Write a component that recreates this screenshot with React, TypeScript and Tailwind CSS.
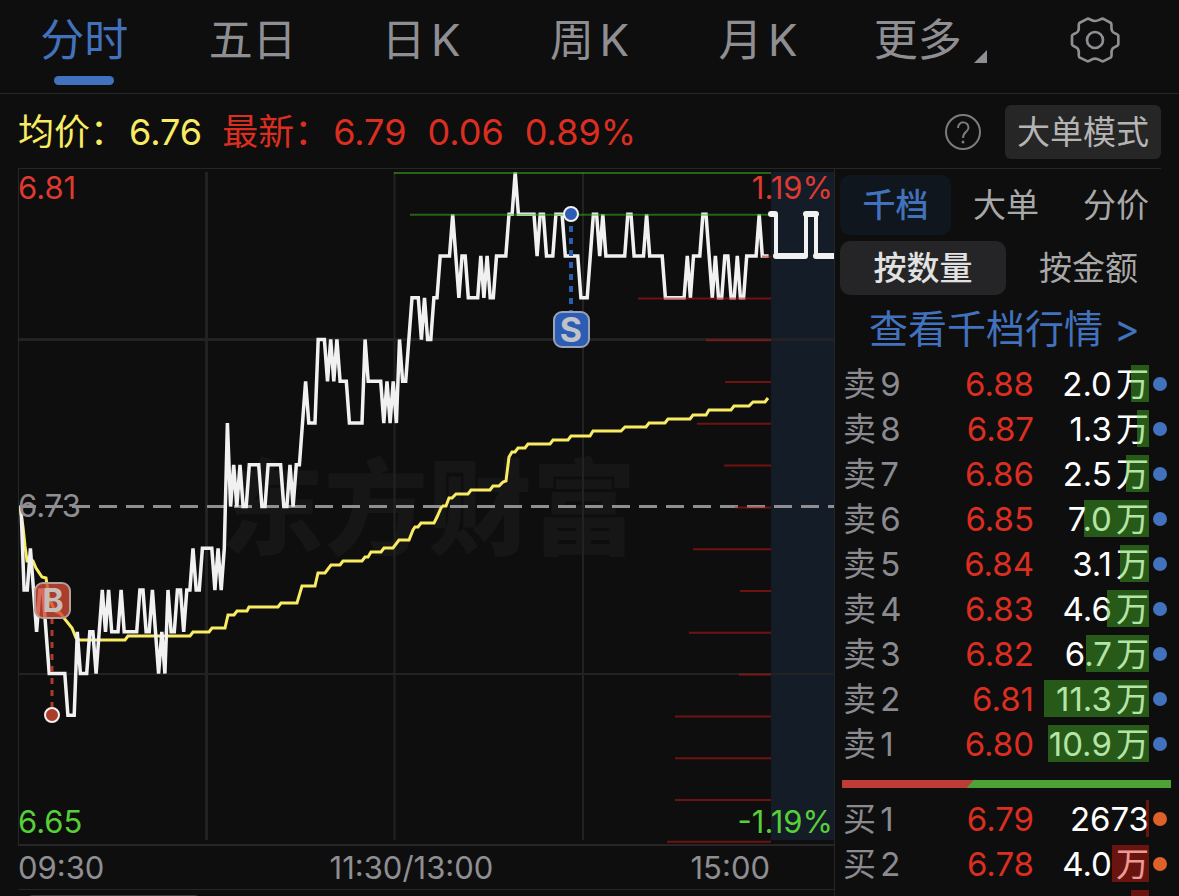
import React from 'react';

const tabs = ['分时', '五日', '日K', '周K', '月K'];

// [minute, price in cents above 6.00]
const prices: [number, number][] = [
  [0, 73], [1, 71], [2, 71], [3, 72], [5, 70], [6, 71], [7, 71], [9, 69], [14, 69], [15, 68],
  [17, 68], [18, 70], [19, 69], [21, 69], [22, 70], [23, 70], [24, 69], [26, 71], [27, 70], [28, 71],
  [29, 70], [31, 70], [32, 71], [33, 70], [37, 70], [38, 71], [39, 71], [40, 70], [41, 70], [42, 71],
  [44, 69], [45, 70], [46, 69], [47, 71], [48, 70], [49, 70], [50, 71], [51, 71], [52, 70], [53, 71],
  [54, 71], [55, 72], [56, 71], [57, 71], [58, 72], [61, 72], [62, 71], [63, 72], [64, 71], [65, 72],
  [66, 75], [67, 73], [68, 74], [69, 73], [70, 74], [71, 73], [72, 73], [73, 74], [76, 74], [77, 73],
  [78, 73], [79, 74], [83, 74], [84, 73], [85, 73], [86, 74], [87, 73], [88, 74], [89, 74], [91, 76],
  [92, 75], [94, 75], [95, 77], [97, 77], [98, 76], [99, 77], [100, 76], [101, 77], [102, 76], [104, 76],
  [105, 75], [109, 75], [110, 77], [111, 76], [115, 76], [116, 75], [117, 76], [118, 75], [119, 76], [120, 75],
  [121, 77], [122, 76], [123, 76], [125, 78], [127, 78], [128, 77], [129, 78], [130, 77], [131, 77], [132, 78],
  [133, 78], [134, 79], [137, 79], [138, 80], [140, 78], [141, 79], [142, 79], [143, 78], [146, 78], [147, 79],
  [148, 78], [149, 79], [150, 78], [151, 78], [152, 79], [155, 79], [156, 80], [157, 80], [158, 81], [159, 80],
  [164, 80], [165, 79], [166, 80], [167, 80], [168, 79], [170, 79], [171, 80], [173, 80], [174, 79], [178, 79],
  [179, 78], [181, 78], [183, 80], [184, 80], [185, 79], [186, 80], [187, 79], [193, 79], [194, 80], [195, 80],
  [196, 79], [199, 79], [200, 80], [201, 79], [205, 79], [206, 78], [212, 78], [213, 79], [214, 78], [215, 79],
  [217, 79], [218, 80], [219, 80], [221, 78], [222, 79], [223, 78], [224, 78], [225, 79], [226, 79], [227, 78],
  [228, 78], [229, 79], [230, 78], [231, 78], [232, 79], [235, 79], [236, 80], [237, 79], [239, 79],
];

const average =
  '20,506 23,527 25,546 27,561 33,561 36,568 42,577 46,578 49,598 55,611 60,613 72,628 76,638 80,640 125,640 128,636 190,636 193,632 209,632 212,628 225,628 228,615 234,615 237,611 247,611 249,607 278,607 281,603 297,603 302,586 315,586 318,573 325,573 331,565 340,565 343,561 362,561 365,557 368,557 371,552 381,552 384,548 393,548 399,540 409,540 413,530 415,527 418,527 421,523 434,523 437,517 441,508 443,506 446,506 449,498 452,498 456,494 468,494 471,490 490,490 493,486 499,486 503,482 506,481 509,457 512,452 515,452 518,448 525,448 528,444 550,444 553,440 568,440 571,436 590,436 593,431 621,431 625,427 646,427 649,423 665,423 668,419 690,419 693,415 706,415 709,410 731,410 734,406 749,406 753,402 765,402 768,398';

// start x of every volume bar, top price level first
const levels = [394, 410, 762, 638, 706, 725, 697, 724, 735, 693, 740, 689, 739, 675, 675, 675, 667];

const toX = (minute: number) => 21 + minute * 3.128;
const toY = (cents: number) => 172.5 + (81 - cents) * 41.75;
const pricePoints = prices.map(([m, c]) => `${toX(m).toFixed(1)},${toY(c).toFixed(1)}`).join(' ');

type Order = { label: string; price: string; volume: string; bar: number };

const asks: Order[] = [
  { label: '卖9', price: '6.88', volume: '2.0万', bar: 18 },
  { label: '卖8', price: '6.87', volume: '1.3万', bar: 12 },
  { label: '卖7', price: '6.86', volume: '2.5万', bar: 23 },
  { label: '卖6', price: '6.85', volume: '7.0万', bar: 65 },
  { label: '卖5', price: '6.84', volume: '3.1万', bar: 29 },
  { label: '卖4', price: '6.83', volume: '4.6万', bar: 42 },
  { label: '卖3', price: '6.82', volume: '6.7万', bar: 63 },
  { label: '卖2', price: '6.81', volume: '11.3万', bar: 105 },
  { label: '卖1', price: '6.80', volume: '10.9万', bar: 101 },
];

const bids: Order[] = [
  { label: '买1', price: '6.79', volume: '2673', bar: 3 },
  { label: '买2', price: '6.78', volume: '4.0万', bar: 37 },
  { label: '', price: '', volume: '', bar: 18 },
];

function OrderTable({ orders, side }: { orders: Order[]; side: 'ask' | 'bid' }) {
  const barColor = side === 'ask' ? 'bg-[#4ac026]/42' : 'bg-[#dc1c12]/45';
  const dotColor = side === 'ask' ? 'bg-[#4272bd]' : 'bg-[#dd6128]';
  return (
    <table className="w-full table-fixed border-collapse text-[33px] leading-[45px]">
      <tbody>
        {orders.map((o) => (
          <tr key={o.label} className="h-[45px]">
            <td className="w-[80px] p-0 pl-2 text-left text-[#8a8a8f]">{o.label}</td>
            <td className="p-0 text-right text-[#dc2e20]">{o.price}</td>
            <td className="relative w-[115px] p-0 text-right whitespace-nowrap text-white">
              {o.volume}
              <span className={`absolute right-0 top-[3px] h-[37px] ${barColor}`} style={{ width: o.bar }} />
            </td>
            <td className="w-[30px] p-0 pb-0.5 pl-1">
              {o.label && <span className={`block size-[14px] rounded-full ${dotColor}`} />}
            </td>
          </tr>
        ))}
      </tbody>
    </table>
  );
}

function Chart() {
  return (
    <svg viewBox="19 169 815 675" className="block h-auto w-full" role="img" aria-label="分时走势">
      <rect x="771" y="172" width="63" height="668" fill="#141c28" />

      {/* Watermark */}
      <text x="220" y="547" fontSize="104" fontWeight="900" fill="#161616">东方财富</text>

      {/* Grid */}
      <g stroke="#222222">
        <path d="M206.5 172V840M19 339.5H834" strokeWidth="3" />
        <path d="M394.5 172V840M583 172V840M19 674H834" strokeWidth="2" />
      </g>
      <path d="M18 506.5H834" stroke="#8e8e93" strokeWidth="3" strokeDasharray="18 9" />

      <polyline points={average} fill="none" stroke="#f9ec62" strokeWidth="3" />
      <polyline points={pricePoints} fill="none" stroke="#f1f1f1" strokeWidth="3.5" />

      {/* Volume at price */}
      {levels.map((x, i) => (
        <path
          key={i}
          d={`M${x} ${173 + i * 41.8}H771`}
          stroke={i < 2 ? '#35ad18' : '#c01812'}
          strokeOpacity="0.55"
          strokeWidth="2"
        />
      ))}

      {/* Latest ticks */}
      <path d="M776 214V256M806 214V256M816 214V256" stroke="#f1f1f1" strokeWidth="4" />
      <path d="M771 214H775M776 256H805M806 214H816M816 256H836" stroke="#f1f1f1" strokeWidth="6" strokeLinecap="round" />

      {/* Sell marker */}
      <path d="M571 220V312" stroke="#2c5cb4" strokeWidth="4" strokeDasharray="6 6" strokeDashoffset="6" />
      <circle cx="571" cy="214" r="7" fill="#2c5cb4" stroke="#f1f1f1" strokeWidth="2" />
      <rect x="554" y="312" width="35" height="35" rx="8" fill="#2c5cb4" stroke="#9aa3b5" strokeWidth="2" />
      <text x="571" y="342" textAnchor="middle" fontSize="34" fontWeight="700" fill="#bfc2c8">S</text>

      {/* Buy marker */}
      <path d="M52 618V708" stroke="#ad3b2b" strokeWidth="3" strokeDasharray="6 6" />
      <circle cx="52" cy="715" r="7" fill="#ad3b2b" stroke="#f1f1f1" strokeWidth="2" />
      <rect x="35" y="583" width="35" height="35" rx="8" fill="#d24a35" fillOpacity="0.8" stroke="#b5a09c" strokeWidth="2" />
      <text x="53" y="612" textAnchor="middle" fontSize="32" fontWeight="700" fill="#c8bcb8">B</text>

      <g fontSize="31">
        <text x="18" y="199" fill="#df3a30">6.81</text>
        <text x="18" y="517" fill="#8e8e93">6.73</text>
        <text x="18" y="833" fill="#57cf38">6.65</text>
        <text x="833" y="199" textAnchor="end" fill="#df3a30">1.19%</text>
        <text x="833" y="833" textAnchor="end" fill="#57cf38">-1.19%</text>
      </g>
    </svg>
  );
}

export default function App() {
  return (
    <div className="flex h-screen flex-col overflow-hidden bg-[#0e0e0e] font-['Inter','Noto_Sans_CJK_SC',sans-serif] [text-autospace:normal]">
      {/* Period tabs */}
      <nav className="grid h-[94px] shrink-0 grid-cols-7 border-b border-[#262626] text-[44px] leading-[80px] text-[#8e8e93]">
        {tabs.map((t, i) => (
          <button key={t} className={`flex flex-col items-center ${i === 0 ? 'text-[#4272bd]' : ''}`}>
            <span className="h-[76px]">{t}</span>
            {i === 0 && <span className="h-[9px] w-[60px] rounded-full bg-[#4272bd]" />}
          </button>
        ))}
        <button className="flex justify-center gap-3 pl-2">
          更多
          <svg viewBox="0 0 13 13" className="mt-[50px] size-[13px]" fill="currentColor">
            <path d="M13 0V13H0Z" />
          </svg>
        </button>
        <button aria-label="设置" className="flex h-20 items-center justify-center">
          <svg viewBox="29 30 150 150" className="size-[50px]" fill="none" stroke="currentColor" strokeWidth="8">
            <circle cx="104" cy="105" r="24" />
            <path d="M82 41C90 41 92 48 104 48C116 48 120 41 128 41L152 54C156 60 150 70 156 79C161 87 172 86 174 92V118C172 126 161 124 156 132C150 141 157 150 152 157L128 169C120 169 116 161 104 161C92 161 90 169 82 169L57 157C52 150 59 141 53 132C48 124 37 126 35 118V92C37 86 48 87 53 79C59 70 52 60 57 54Z" strokeLinejoin="round" />
          </svg>
        </button>
      </nav>

      {/* Quote summary */}
      <div className="flex h-[74px] shrink-0 items-center px-[18px] pt-0.5 text-[36px] leading-[54px] whitespace-nowrap">
        <span className="flex gap-[3px] text-[#f9ec62]">
          <span>均价：</span>
          <span>6.76</span>
        </span>
        <span className="ml-5 flex gap-[3px] text-[#dc2e20]">
          <span>最新：</span>
          <span className="flex gap-[21px]">
            <span>6.79</span>
            <span>0.06</span>
            <span>0.89%</span>
          </span>
        </span>
        <button aria-label="帮助" className="mr-6 ml-auto text-[#7c7c7e]">
          <svg viewBox="0 0 36 36" className="size-9" fill="none" stroke="currentColor" strokeWidth="2">
            <circle cx="18" cy="18" r="17" />
            <path d="M13 14C13 6 24 7 23.500 14C23 18 18 18 18 24" />
            <circle cx="18" cy="28" r="1.500" fill="currentColor" stroke="none" />
          </svg>
        </button>
        <button className="h-[54px] rounded-md bg-[#262626] px-3 text-[33px] text-[#b4b4b4]">大单模式</button>
      </div>

      <main className="flex min-h-0 flex-1">
        <section className="ml-[18px] min-w-0 flex-1 border-t border-r border-[#262626]">
          <div className="border-b-2 border-l border-[#262626]">
            <Chart />
          </div>
          <div className="flex h-11 items-center justify-between border-b border-[#262626] pt-0.5 pr-16 text-[31px] text-[#8e8e93]">
            <span>09:30</span>
            <span className="pl-7">11:30/13:00</span>
            <span>15:00</span>
          </div>
          <div className="mt-[5px] ml-[7px] h-2 w-[177px] rounded-t-lg bg-[#3a3a3c]" />
        </section>

        {/* Order book */}
        <aside className="w-[344px] shrink-0">
          <div className="mr-[18px] border-t border-[#262626]" />
          <div className="mt-1.5 flex pr-2 pl-[5px] text-[33px] leading-[60px] text-[#a8a8a8]">
            <button className="w-[111px] rounded-[10px] bg-[#10161e] font-medium text-[#4272bd]">千档</button>
            <button className="flex-1">大单</button>
            <button className="flex-1">分价</button>
          </div>
          <div className="mt-1.5 flex pr-2 pl-[5px] text-[33px] leading-[54px] text-[#a8a8a8]">
            <button className="w-[166px] rounded-[10px] bg-[#252527] font-medium text-[#e2e2e2]">按数量</button>
            <button className="flex-1">按金额</button>
          </div>
          <a href="#depth" className="block h-[67px] pl-[34px] text-[39px] leading-[67px] whitespace-nowrap text-[#4272bd]">
            查看千档行情 &gt;
          </a>
          <OrderTable orders={asks} side="ask" />
          <div className="mt-[13px] mr-2 mb-[9px] ml-[7px] h-2 bg-[#4ea136]">
            <div className="h-2 w-2/5 bg-[#bd3d35] [clip-path:polygon(0_0,100%_0,calc(100%-7px)_100%,0_100%)]" />
          </div>
          <OrderTable orders={bids} side="bid" />
        </aside>
      </main>
    </div>
  );
}
